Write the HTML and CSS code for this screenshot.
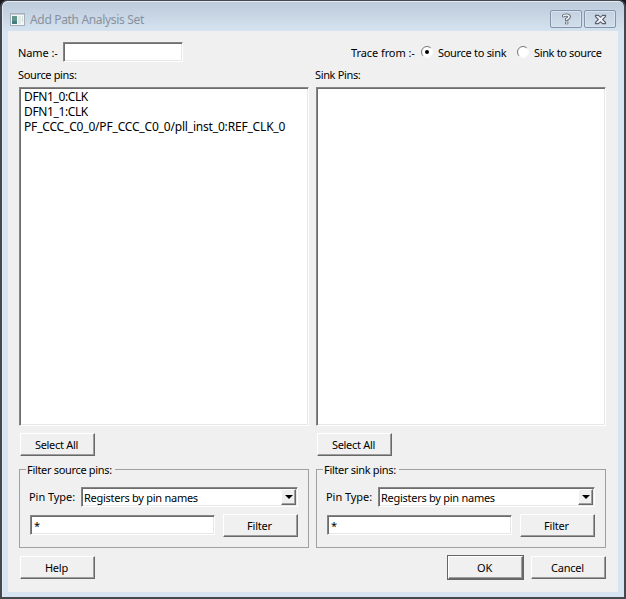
FILE: index.html
```html
<!DOCTYPE html>
<html lang="en">
<head>
<meta charset="utf-8">
<title>Add Path Analysis Set</title>
<link rel="stylesheet" href="styles.css">
</head>
<body>
<div class="window">
  <header class="titlebar">
    <svg class="app-icon" width="15" height="13" viewBox="0 0 15 13"><rect x=".5" y=".5" width="14" height="12" fill="#f5f7f6" stroke="#a5b0ba"/><path d="M1 1.5h13" stroke="#c6ced5"/><path d="M2 3h5v8H2z" fill="#63958f"/><path d="M2 8h5v3H2z" fill="#437d7e"/><path d="M8 3h3v8H8z" fill="#e0e8e3"/><path d="M12 3h1v6h-1z" fill="#d3dbd9"/></svg>
    <h1 class="title">Add Path Analysis Set</h1>
    <div class="caption-buttons">
      <span class="caption"><svg width="9" height="12" viewBox="0 0 9 12"><path d="M1 4.300V3.600Q1.300 2 4.300 2T7.300 3.900Q7.200 5 4.700 6.100V8M4.700 8.700v2.600" fill="none" stroke="#59616e" stroke-width="3.200"/><path d="M1.200 3.500Q1.600 2 4.300 2T7.100 3.900Q7 5 4.700 6.100V7.300M4.700 9.300v1.400" fill="none" stroke="#f3f6fa" stroke-width="1.600"/></svg></span>
      <span class="caption"><svg width="13" height="11" viewBox="0 0 14 12"><path d="M1.500 1.500h3.300L7 3.600l2.200-2.100h3.300v1.200L9.300 6l3.200 3.300v1.200H9.200L7 8.400l-2.200 2.100H1.500V9.300L4.700 6 1.500 2.700z" fill="#f3f6fa" stroke="#59616e" stroke-width="1.200"/></svg></span>
    </div>
  </header>
  <main class="client">
    <div class="top">
      <label class="t-name">Name :-</label>
      <div class="field name-field"></div>
      <span class="trace">Trace from :-</span>
      <span class="radio"><svg width="12" height="12" viewBox="0 0 12 12"><circle cx="6" cy="6" r="5" fill="#fff"/><path d="M2.100 9.900A5.500 5.500 0 0 1 9.900 2.100" fill="none" stroke="#777"/><path d="M9.900 2.100A5.500 5.500 0 0 1 2.100 9.900" fill="none" stroke="#fff"/><circle cx="6" cy="6" r="2" fill="#000"/></svg></span>
      <span class="t-source-sink">Source to sink</span>
      <span class="radio radio-second"><svg width="12" height="12" viewBox="0 0 12 12"><circle cx="6" cy="6" r="5" fill="#fff"/><path d="M2.100 9.900A5.500 5.500 0 0 1 9.900 2.100" fill="none" stroke="#777"/><path d="M9.900 2.100A5.500 5.500 0 0 1 2.100 9.900" fill="none" stroke="#fff"/></svg></span>
      <span class="t-sink-source">Sink to source</span>
    </div>
    <div class="columns">
      <section class="column">
        <div class="heading">Source pins:</div>
        <div class="field list">
          <div class="pin pin-short">DFN1_0:CLK</div>
          <div class="pin pin-short">DFN1_1:CLK</div>
          <div class="pin">PF_CCC_C0_0/PF_CCC_C0_0/pll_inst_0:REF_CLK_0</div>
        </div>
        <div class="button select">Select All</div>
        <fieldset class="group">
          <legend>Filter source pins:</legend>
          <div class="type-row"><span class="type-label">Pin Type:</span>
            <div class="field combo"><span class="combo-value">Registers by pin names</span><span class="drop"><svg width="8" height="4" viewBox="0 0 8 4"><path d="M0 0h8L4 4z"/></svg></span></div></div>
          <div class="filter-row"><div class="field pattern">*</div><div class="button">Filter</div></div>
        </fieldset>
      </section>
      <section class="column">
        <div class="heading">Sink Pins:</div>
        <div class="field list"></div>
        <div class="button select">Select All</div>
        <fieldset class="group">
          <legend>Filter sink pins:</legend>
          <div class="type-row"><span class="type-label">Pin Type:</span>
            <div class="field combo"><span class="combo-value">Registers by pin names</span><span class="drop"><svg width="8" height="4" viewBox="0 0 8 4"><path d="M0 0h8L4 4z"/></svg></span></div></div>
          <div class="filter-row"><div class="field pattern">*</div><div class="button">Filter</div></div>
        </fieldset>
      </section>
    </div>
    <footer class="footer">
      <div class="button help">Help</div>
      <div class="default"><div class="button">OK</div></div>
      <div class="button">Cancel</div>
    </footer>
  </main>
</div>
</body>
</html>
```
FILE: styles.css
```css
* { box-sizing: border-box; }
body { margin: 0; background: #16181c; font: 11px/14px "Noto Sans", "Open Sans", sans-serif; color: #000; }
svg { display: block; }
.window { width: 626px; height: 599px; padding: 0 6px 6px; border: 2px solid #45484e; border-width: 1px 2px 2px; border-radius: 7px 7px 0 0; background: linear-gradient(#bccada 0, #c6d3e2 12px, #d7e4f1 32px, #d7e4f1 100%); box-shadow: inset 0 1px #e2eaf2, inset 1px 0 #e0edf7; white-space: nowrap; }
.titlebar { display: flex; height: 30px; padding: 9px 2px 0 2px; }
.app-icon { margin-top: 3px; }
.title { margin: 1px 0 0 5px; font: 12px/18px "Noto Sans", sans-serif; color: #88929e; letter-spacing: -.33px; }
.caption-buttons { display: flex; gap: 2px; margin-left: auto; }
.caption { display: flex; align-items: center; justify-content: center; width: 32px; height: 18px; border: 1px solid #8394ad; border-radius: 2px; background: linear-gradient(#c4d1e0, #d1deeb); box-shadow: inset 0 0 0 1px #d7e2ee; }
.client { height: 561px; padding: 11px 11px 0; background: #f0f0f0; }
.top { display: flex; height: 26px; line-height: 22px; }
.field { background: #fff; border: 1px solid; border-color: #858585 #fff #fff #858585; box-shadow: inset 1px 1px #6d6d6d, inset -1px -1px #e7e7e7; }
.t-name { width: 45px; margin-left: -1px; letter-spacing: -.1px; }
.name-field { width: 120px; height: 20px; }
.trace { margin-left: 168px; width: 70px; letter-spacing: -.08px; }
.radio { width: 12px; padding-top: 4px; margin-right: 5px; }
.t-source-sink { width: 69px; letter-spacing: -.3px; }
.radio-second { margin-left: 10px; }
.t-sink-source { letter-spacing: -.35px; }
.columns { display: grid; grid-template-columns: 290px 290px; gap: 7px; }
.heading { height: 19px; line-height: 14px; margin-left: -1px; letter-spacing: -.35px; }
.list { height: 339px; padding: 1px 4px; font: 12px/15px "Noto Sans", sans-serif; }
.pin { height: 15px; letter-spacing: -.18px; }
.pin-short { letter-spacing: -.38px; }
.button { display: flex; align-items: center; justify-content: center; width: 75px; height: 23px; padding-right: 2px; background: #f0f0f0; border: 1px solid; border-color: #fff #686868 #686868 #fff; box-shadow: inset -1px -1px #9d9d9d; letter-spacing: -.2px; }
.select { margin: 7px 0 0 1px; letter-spacing: -.3px; }
.group { height: 86px; margin: 6px 0 0; min-width: 0; padding: 11px 10px 0; border: 1px solid #a0a0a0; }
.group legend { margin-left: -4px; padding: 0 3px 0 1px; height: 14px; line-height: 16px; letter-spacing: -.32px; }
.type-row { display: flex; height: 20px; }
.type-label { width: 52px; margin-left: -1px; line-height: 20px; letter-spacing: -.05px; }
.combo { display: flex; width: 217px; height: 20px; line-height: 20px; padding-left: 2px; }
.combo-value { letter-spacing: -.27px; }
.drop { display: flex; align-items: center; justify-content: center; margin: 1px 1px 0 auto; width: 15px; height: 16px; background: #f0f0f0; border: 1px solid; border-color: #fff #686868 #686868 #fff; box-shadow: inset -1px -1px #a0a0a0; }
.filter-row { display: flex; justify-content: space-between; margin-top: 7px; }
.pattern { width: 185px; height: 20px; margin-top: 1px; padding-left: 3px; line-height: 19px; }
.footer { display: flex; margin-top: 8px; }
.help { margin: 0 352px 0 1px; }
.default { border: 1px solid #666; height: 25px; width: 77px; margin: -1px 7px 0 0; }
```
